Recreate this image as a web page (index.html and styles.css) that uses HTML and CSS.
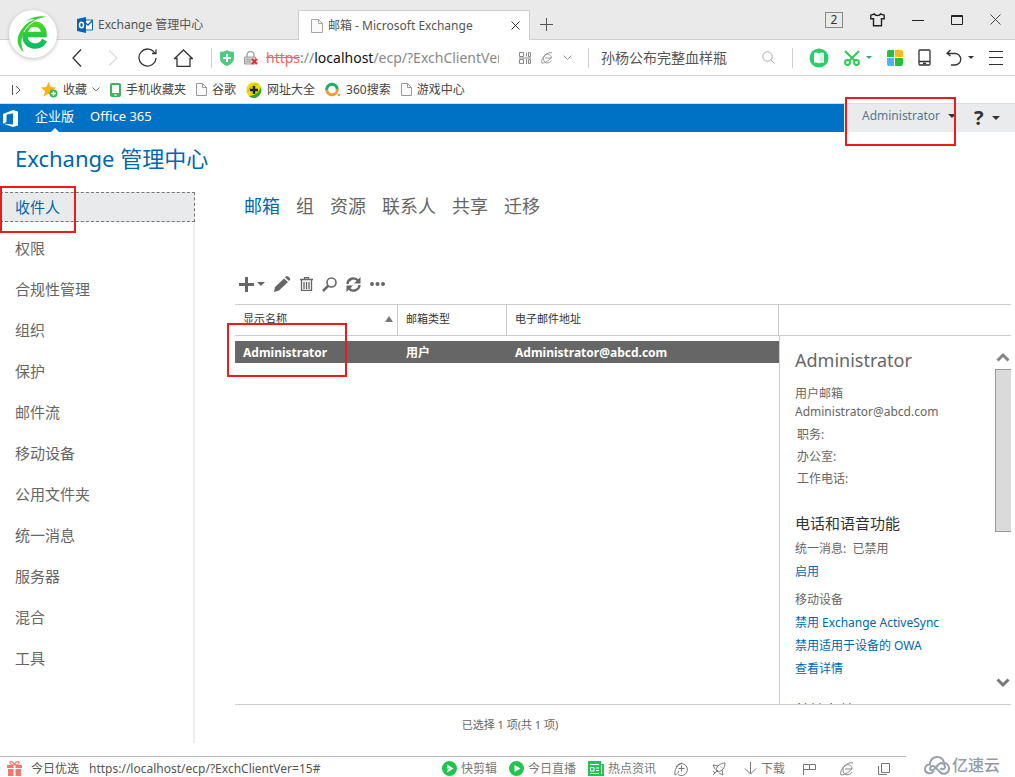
FILE: index.html
```html
<!DOCTYPE html>
<html lang="zh-CN">
<head>
<meta charset="utf-8">
<title>邮箱 - Microsoft Exchange</title>
<link rel="stylesheet" href="styles.css">
</head>
<body>
<header class="browser">
  <div class="tabstrip">
    <div class="browser-logo">
      <svg width="34" height="40" viewBox="0 0 34 40" fill="none">
        <defs><linearGradient id="eg" x1="0" y1="0" x2="0" y2="1"><stop offset="0" stop-color="#49d81f"/><stop offset="1" stop-color="#08bd64"/></linearGradient></defs>
        <path d="M28.500 26c-2 4-5.500 6.500-10.500 6-5.500-.5-9-4.500-9-10.500C9 14 13 10 18 10c6 0 10 4 10 10.500H10" stroke="url(#eg)" stroke-width="5.500"/>
        <path d="M2 14C9 5 22 0 31 3c-9 0-17 5-22 13C5 23 4 31 8 38 1 33 0 25 4 18c4-7 9-10 15-13C13 5 7 8 2 14z" fill="#35cf3c"/>
        <path d="M8 18c3-6 8-10 13-12" stroke="#fff" stroke-width="1"/>
      </svg>
    </div>
    <button class="tab">
      <svg width="16" height="16" viewBox="0 0 16 16"><path d="M6 3h9.500v10H6z" fill="#fff" stroke="#0b68b8"/><path d="M6 4l5 4 5-5" fill="none" stroke="#0b68b8" stroke-width="1.500"/><path d="M0 2l9-2v16l-9-2z" fill="#0764b5"/><ellipse cx="4.500" cy="8" rx="2" ry="2.800" fill="none" stroke="#fff" stroke-width="1.500"/></svg>
      <span>Exchange 管理中心</span>
    </button>
    <div class="tab tab-active">
      <svg width="12" height="14" viewBox="0 0 12 14" fill="#fafafa" stroke="#a5a5a5"><path d="M.5.5h7l4 4v9H.5zM7.500.5v4h4"/></svg>
      <span class="tab-title">邮箱 - Microsoft Exchange</span>
      <button aria-label="关闭标签"><svg width="9" height="9" viewBox="0 0 9 9" stroke="#333"><path d="M.5.5l8 8M8.500.5l-8 8"/></svg></button>
    </div>
    <button class="new-tab" aria-label="新标签"><svg width="13" height="13" viewBox="0 0 13 13" stroke="#555"><path d="M6.500 0v13M0 6.500h13"/></svg></button>
    <div class="window-controls">
      <button class="count">2</button>
      <button aria-label="皮肤"><svg width="15" height="14" viewBox="0 0 15 14" fill="none" stroke="#222" stroke-width="1.400"><path d="M4.500 1L.8 2.200v3.500h2.700V12.800h8V5.700h2.700V2.200L10.500 1c-.5 2-5.500 2-6 0z"/></svg></button>
      <button aria-label="最小化"><svg width="12" height="12" viewBox="0 0 12 12" stroke="#222"><path d="M0 6.500h12"/></svg></button>
      <button aria-label="最大化"><svg width="12" height="12" viewBox="0 0 12 12" fill="none" stroke="#222"><path d="M.5 1.500h11v9H.5zM0 2.500h12"/></svg></button>
      <button aria-label="关闭"><svg width="11" height="11" viewBox="0 0 11 11" stroke="#444"><path d="M.5.5l10 10M10.500.5l-10 10"/></svg></button>
    </div>
  </div>

  <div class="addressbar">
    <div class="nav-buttons">
      <button aria-label="后退"><svg width="10" height="18" viewBox="0 0 10 18" fill="none" stroke="#333" stroke-width="1.300"><path d="M9 .5L1 9l8 8.500"/></svg></button>
      <button aria-label="前进"><svg width="10" height="18" viewBox="0 0 10 18" fill="none" stroke="#ddd" stroke-width="1.300"><path d="M1 1.500L9 9l-8 7.500"/></svg></button>
      <button aria-label="刷新"><svg width="19" height="19" viewBox="0 0 19 19" fill="none" stroke="#333" stroke-width="1.300"><path d="M17 5.500A8.500 8.500 0 1 0 18 10M18 1.500V5.500h-4"/></svg></button>
      <button aria-label="主页"><svg width="19" height="18" viewBox="0 0 19 18" fill="none" stroke="#333" stroke-width="1.300"><path d="M.7 9.500L9.500 1l8.800 8.500H16v7.800H3V9.500z"/></svg></button>
    </div>
    <div class="url-box">
      <svg width="14" height="16" viewBox="0 0 14 16"><path d="M7 0c2 1.500 4.500 1.800 7 1.800V8c0 4-3 6.500-7 8-4-1.500-7-4-7-8V1.800C2.500 1.800 5 1.500 7 0z" fill="#4ecb7c"/><path d="M7 4v8M3 8h8" stroke="#fff" stroke-width="2"/></svg>
      <svg width="14" height="14" viewBox="0 0 14 14"><path d="M3 6V4a3.500 3.500 0 0 1 7 0v2" fill="none" stroke="#a5a5a5" stroke-width="1.500"/><path d="M.5 6h11v7H.5z" fill="#ccc" stroke="#a0a0a0"/><path d="M2 8.500h5M2 10.500h5" stroke="#aaa"/><path d="M8 8l5 5M13 8l-5 5" stroke="#e02a2a" stroke-width="1.800"/></svg>
      <div class="url"><s>https</s>://<b>localhost</b>/ecp/?ExchClientVer=15#</div>
      <svg width="12" height="12" viewBox="0 0 12 12" fill="none" stroke="#888"><path d="M.5.5h4v4h-4zM7.500.5v4M9.500.5h2v4h-2zM.5 7.500h4v4h-4zM7.500 7v5M9.500 7.500h2v4h-2zM0 6h12"/></svg>
      <svg width="12" height="12" viewBox="0 0 14 14" fill="none" stroke="#8b8b8b"><path d="M12 10c-2 4-9 4-9-2 0-7 9-7 9-1H5M1 13C-1 8 7-1 13 1M12 6c-1 3-7 7-11 7"/></svg>
      <svg width="9" height="6" viewBox="0 0 9 6" fill="none" stroke="#999"><path d="M.5.5l4 4 4-4"/></svg>
    </div>
    <div class="search-box">
      <input type="text" value="孙杨公布完整血样瓶" aria-label="搜索">
      <svg width="13" height="13" viewBox="0 0 13 13" fill="none" stroke="#aaa"><circle cx="5.500" cy="5.500" r="4.700"/><path d="M9 9l3.500 3.500"/></svg>
    </div>
    <div class="extensions">
      <button aria-label="阅读"><svg width="20" height="20" viewBox="0 0 20 20"><circle cx="10" cy="10" r="9.500" fill="#27cf6c"/><path d="M5 5c2-1 3.500-.5 5 .5 1.500-1 3-1.500 5-.5v10c-2-.7-3.500-.4-5 .5-1.500-.9-3-1.200-5-.5z" fill="#fff"/><path d="M10.500 6v9l4-.5V5.500z" fill="#d5f5e1"/></svg></button>
      <button class="with-caret" aria-label="截图"><svg width="16" height="16" viewBox="0 0 16 16" fill="none" stroke="#2bcb56" stroke-width="2"><path d="M1 1l10 10M15 1L5 11"/><circle cx="3.500" cy="12.500" r="2.400"/><circle cx="12.500" cy="12.500" r="2.400"/></svg><i class="caret caret-green"></i></button>
      <button aria-label="应用"><svg width="16" height="16" viewBox="0 0 16 16"><path d="M0 2q0-2 2-2h5v7H0z" fill="#24bd3c"/><path d="M8 0h6q2 0 2 2v5H8z" fill="#fbba11"/><path d="M0 8h7v8H2q-2 0-2-2z" fill="#4bb4f0"/><path d="M8 8h8v6q0 2-2 2H8z" fill="#24c03c"/></svg></button>
      <button aria-label="手机"><svg width="13" height="17" viewBox="0 0 13 17" fill="none" stroke="#333" stroke-width="1.300"><rect x="1" y="1" width="11" height="15" rx="1"/><path d="M1 12.500h11M5 14.500h3"/></svg></button>
      <button class="with-caret" aria-label="恢复"><svg width="16" height="17" viewBox="0 0 16 17" fill="none" stroke="#333" stroke-width="1.300"><path d="M4.500 1L1 4.500 4.500 7M1 4.500h8a5.500 5.500 0 0 1 0 11.500H5"/></svg><i class="caret"></i></button>
      <button aria-label="菜单"><svg width="14" height="14" viewBox="0 0 14 14" stroke="#333"><path d="M0 .5h14M0 6.500h14M0 13.500h14"/></svg></button>
    </div>
  </div>

  <nav class="bookmarks">
    <button aria-label="展开"><svg width="9" height="10" viewBox="0 0 9 10" fill="none" stroke="#555"><path d="M.5 0v10M4 1l4 4-4 4"/></svg></button>
    <a class="favorites" href="#"><svg width="17" height="16" viewBox="0 0 17 16"><path d="M7.500 0l2.300 5 5.200.6-4 3.600 1.200 5.300-4.700-2.700-4.800 2.700L4 9.200 0 5.600 5.300 5z" fill="#fbb316"/><circle cx="12.500" cy="11.500" r="4" fill="#35b957"/><path d="M12.500 9v5M10 11.500h5" stroke="#fff" stroke-width="1.300"/></svg>收藏<svg width="8" height="5" viewBox="0 0 8 5" fill="none" stroke="#777"><path d="M.5.500L4 4 7.500.5"/></svg></a>
    <a href="#"><svg width="11" height="14" viewBox="0 0 11 14"><rect width="11" height="14" rx="2" fill="#3bb55c"/><path d="M2 2h7v8H2zM4 11.500h3v1H4z" fill="#fff"/></svg>手机收藏夹</a>
    <a href="#"><svg width="11" height="13" viewBox="0 0 11 13" fill="#fafafa" stroke="#999"><path d="M.5.5h6l4 4v8H.5zM6.500.5v4h4"/></svg>谷歌</a>
    <a href="#"><svg width="16" height="16" viewBox="0 0 16 16"><circle cx="8" cy="8" r="7.700" fill="#f5d60d"/><path d="M1 11C3 6 8 1 13 2c-5 0-9 3-12 9z" fill="#2aa23e"/><path d="M3 14c5 0 10-3 12-9 1 5-1 10-7 11-2 0-4-1-5-2z" fill="#2aa23e"/><path d="M8 4v8M4 8h8" stroke="#142c19" stroke-width="2.500"/></svg>网址大全</a>
    <a href="#"><svg width="16" height="15" viewBox="0 0 16 15" fill="none" stroke-width="3"><path d="M1.700 8a5.300 5.300 0 0 1 10.600-1" stroke="#1fac67"/><path d="M1.700 8a5.300 5.300 0 0 0 10.600-1" stroke="#f39b36"/><circle cx="14" cy="12.800" r="1.300" fill="#f39b36" stroke="none"/></svg>360搜索</a>
    <a href="#"><svg width="11" height="13" viewBox="0 0 11 13" fill="#fafafa" stroke="#999"><path d="M.5.5h6l4 4v8H.5zM6.500.5v4h4"/></svg>游戏中心</a>
  </nav>
</header>

<div class="suitebar">
  <div class="suite-main">
    <svg width="16" height="17" viewBox="0 0 16 17"><path d="M0 4l10-4 5 1.500v14L10 17 0 13.500l10 1V3.200L3.500 4.800v7.200L0 13.500z" fill="#fff"/></svg>
    <a class="suite-current" href="#">企业版</a>
    <a href="#">Office 365</a>
  </div>
  <div class="suite-user">
    <button class="user-menu">Administrator<i class="caret"></i></button>
    <button class="help-menu"><b>?</b><i class="caret"></i></button>
    <span class="callout callout-user"></span>
  </div>
</div>

<main class="page">
  <h1>Exchange 管理中心</h1>
  <div class="columns">
    <nav class="sidebar">
      <a class="selected" href="#">收件人</a>
      <a href="#">权限</a>
      <a href="#">合规性管理</a>
      <a href="#">组织</a>
      <a href="#">保护</a>
      <a href="#">邮件流</a>
      <a href="#">移动设备</a>
      <a href="#">公用文件夹</a>
      <a href="#">统一消息</a>
      <a href="#">服务器</a>
      <a href="#">混合</a>
      <a href="#">工具</a>
      <span class="callout callout-nav"></span>
    </nav>
    <section class="workspace">
      <nav class="subtabs">
        <a class="current" href="#">邮箱</a><a href="#">组</a><a href="#">资源</a><a href="#">联系人</a><a href="#">共享</a><a href="#">迁移</a>
      </nav>
      <div class="commands">
        <button class="with-caret" aria-label="新建"><svg width="15" height="15" viewBox="0 0 15 15" stroke="#666" stroke-width="3"><path d="M7.500 0v15M0 7.500h15"/></svg><i class="caret"></i></button>
        <button aria-label="编辑"><svg width="17" height="16" viewBox="0 0 17 16" fill="#666"><path d="M1 11L10 2.500l4 3.500-9 8.500-5 1.500zM11 1.500l1.500-1.500q1 0 2 .8l1.500 1.500q.5 1 0 1.500L15 5z"/></svg></button>
        <button aria-label="删除"><svg width="13" height="14" viewBox="0 0 13 14" fill="none" stroke="#666"><path d="M0 2.500h13M4.500 2V.5h4V2M1.500 3v10.500h10V3M4 5v7M6.500 5v7M9 5v7" stroke-width="1.300"/></svg></button>
        <button aria-label="搜索"><svg width="15" height="15" viewBox="0 0 15 15" fill="none" stroke="#666"><circle cx="9.500" cy="5.500" r="4.500" stroke-width="1.600"/><path d="M6 9l-5 5" stroke-width="2.500"/></svg></button>
        <button aria-label="刷新"><svg width="15" height="15" viewBox="0 0 15 15" fill="none" stroke="#666" stroke-width="2.400"><path d="M1.500 7A6 6 0 0 1 12 3.500M13.500 8A6 6 0 0 1 3 11.500"/><path d="M14.500 0v6.500H8zM.5 15V8.500H7z" fill="#666" stroke="none"/></svg></button>
        <button aria-label="更多"><svg width="15" height="4" viewBox="0 0 15 4" fill="#666"><circle cx="2" cy="2" r="2"/><circle cx="7.500" cy="2" r="2"/><circle cx="13" cy="2" r="2"/></svg></button>
      </div>
      <div class="split">
        <div class="list">
          <table>
            <thead><tr><th class="col-name"><span>显示名称<i class="sort"></i></span></th><th class="col-type">邮箱类型</th><th>电子邮件地址</th></tr></thead>
            <tbody><tr><td>Administrator</td><td>用户</td><td>Administrator@abcd.com</td></tr></tbody>
          </table>
          <span class="callout callout-row"></span>
        </div>
        <div class="side">
          <div class="side-head"></div>
          <aside class="details">
            <div class="details-body">
              <h2>Administrator</h2>
              <p class="ident">用户邮箱<br>Administrator@abcd.com</p>
              <ul><li>职务:</li><li>办公室:</li><li>工作电话:</li></ul>
              <h3>电话和语音功能</h3>
              <p>统一消息:&nbsp; 已禁用</p>
              <a href="#">启用</a>
              <p class="group">移动设备</p>
              <a href="#">禁用 Exchange ActiveSync</a>
              <a href="#">禁用适用于设备的 OWA</a>
              <a href="#">查看详情</a>
              <h3 class="next">就地存档</h3>
            </div>
            <div class="scroller">
              <button aria-label="向上"><svg width="14" height="10" viewBox="0 0 14 10" fill="none" stroke="#858585" stroke-width="3"><path d="M1.500 8.500L7 3l5.500 5.500"/></svg></button>
              <div class="track"><div class="thumb"></div></div>
              <button aria-label="向下"><svg width="14" height="10" viewBox="0 0 14 10" fill="none" stroke="#777" stroke-width="3"><path d="M1.500 1.500L7 7l5.500-5.500"/></svg></button>
            </div>
          </aside>
        </div>
      </div>
      <p class="summary">已选择 1 项(共 1 项)</p>
    </section>
  </div>
</main>

<footer class="statusbar">
  <div class="status-items">
    <svg width="15" height="15" viewBox="0 0 15 15"><path d="M0 4h6.500v3H0zM8.500 4H15v3H8.500zM1 8h5.500v7H1zM8.500 8H14v7H8.500z" fill="#f2786f"/><path d="M7 4C3 4 2 1 4 .7 6 .5 7 2 7.500 4 8 2 9 .5 11 .7c2 .3 1 3.300-3 3.300" fill="none" stroke="#f2786f" stroke-width="1.200"/></svg>
    <span class="pick">今日优选</span>
    <span>https://localhost/ecp/?ExchClientVer=15#</span>
    <div class="status-tools">
      <a href="#"><svg width="15" height="15" viewBox="0 0 15 15"><circle cx="7.500" cy="7.500" r="7.500" fill="#1fc64c"/><path d="M5 3.500l6.500 4-6.500 4 1-3.500 3-1-4 .5z" fill="#fff"/></svg>快剪辑</a>
      <a href="#"><svg width="15" height="15" viewBox="0 0 15 15"><circle cx="7.500" cy="7.500" r="7.500" fill="#1fc64c"/><path d="M5.500 4l6 3.500-6 3.500z" fill="#fff"/></svg>今日直播</a>
      <a href="#"><svg width="16" height="15" viewBox="0 0 16 15"><path d="M0 0h13v3h3v12H0z" fill="#1fc64c"/><path d="M2 3.500h9M8 7h3M8 9.500h3M2 12.500h9M13.500 4v9" stroke="#fff"/><path d="M2.500 6.500h3.500v3.500H2.500z" fill="none" stroke="#fff"/></svg>热点资讯</a>
      <button aria-label="加速"><svg width="14" height="14" viewBox="0 0 14 14" fill="none" stroke="#777"><path d="M4 12.500A6 6 0 1 0 2 5M7.500 3.500v6M4.500 6.500h6M1 13C0 8 3 3 8 1M1 13c2-1 3-2 4-4"/></svg></button>
      <button aria-label="火箭"><svg width="14" height="14" viewBox="0 0 14 14" fill="none" stroke="#777"><path d="M4 8C5 4 8 1 13 1c0 5-3 8-7 9zM6 4L1 3l2 4M10 8l1 5-4-2M1 13l5-5M1 9l2 2M9 4.500l1 1"/></svg></button>
      <a href="#"><svg width="13" height="13" viewBox="0 0 13 13" fill="none" stroke="#777"><path d="M6.500 0v12M1 6.500L6.500 12 12 6.500"/></svg>下载</a>
      <button aria-label="标记"><svg width="13" height="12" viewBox="0 0 13 12" fill="none" stroke="#777"><path d="M.5 12V1.500h12v5H.5M6.500 1.500v5"/></svg></button>
      <button aria-label="内核"><svg width="14" height="14" viewBox="0 0 14 14" fill="none" stroke="#888"><path d="M12 10c-2 4-9 4-9-2 0-7 9-7 9-1H5M1 13C-1 8 7-1 13 1M12 6c-1 3-7 7-11 7"/></svg></button>
      <button aria-label="窗口"><svg width="12" height="12" viewBox="0 0 12 12" fill="none" stroke="#777"><path d="M3.500.5h8v9h-8zM.5 3v8.500H9"/></svg></button>
    </div>
  </div>
  <div class="watermark">
    <svg width="26" height="19" viewBox="0 0 26 19" fill="none" stroke="#9aa1ad" stroke-width="2"><path d="M10 15c-3 4-9 2.500-9-2 0-3.500 3-5 5-4.500C6 4 9 1 13 1s6.500 2.500 7 6c3 0 5 2.500 5 5.500 0 5-6 7-9 3.500l-5-5c-2-2-5-.5-5 1.500s3 2.500 4.500.5l4-4.500c3-3 7-.5 6.500 3-.5 2-3.500 2.500-4.500.5"/></svg>
    <span>亿速云</span>
  </div>
</footer>
</body>
</html>
```
FILE: styles.css
```css
* { box-sizing: border-box; }
body {
  margin: 0;
  height: 100vh;
  display: flex;
  flex-direction: column;
  overflow: hidden;
  background: #fff;
  color: #666;
  font: 12px/18px "Noto Sans", "Noto Sans CJK SC", sans-serif;
}
h1, h2, h3, p, ul { margin: 0; padding: 0; font-weight: 400; list-style: none; }
a { color: inherit; text-decoration: none; }
button {
  display: flex;
  align-items: center;
  padding: 0;
  border: 0;
  background: none;
  color: inherit;
  font: inherit;
}
svg { display: block; flex: none; }
.caret {
  border: 4px solid transparent;
  border-top-color: #333;
  border-bottom: 0;
}
.extensions .caret { border-width: 3px; border-bottom: 0; }
.extensions .caret-green { border-top-color: #35a870; }
.callout { position: absolute; border: 2px solid #ec1c1c; pointer-events: none; }

/* Browser chrome */
.tabstrip {
  position: relative;
  display: flex;
  align-items: flex-end;
  height: 40px;
  padding-left: 66px;
  background: #eaeaea;
  border-bottom: 1px solid #d0d0d0;
}
.browser-logo {
  position: absolute;
  left: 9px;
  top: 10px;
  display: grid;
  place-items: center;
  width: 48px;
  height: 48px;
  border-radius: 50%;
  background: #fff;
  box-shadow: 0 1px 4px #bbb;
}
.tab {
  display: flex;
  align-items: center;
  gap: 5px;
  width: 232px;
  height: 29px;
  padding: 0 9px 0 11px;
  color: #555;
}
.tab-active {
  height: 30px;
  margin-bottom: -1px;
  padding-left: 12px;
  background: #fff;
  border: 1px solid #d0d0d0;
  border-bottom: 0;
}
.tab-title { flex: 1; }
.new-tab { height: 30px; margin-left: 10px; }
.window-controls {
  display: flex;
  align-items: center;
  gap: 27px;
  height: 39px;
  margin-left: auto;
  padding-right: 14px;
}
.count { width: 18px; height: 16px; justify-content: center; border: 1px solid #888; color: #333; }
.addressbar {
  display: flex;
  align-items: center;
  height: 36px;
  padding: 0 12px 0 72px;
  border-bottom: 1px solid #d4d4d4;
}
.nav-buttons { display: flex; align-items: center; gap: 17px; padding-right: 18px; }
.nav-buttons button:nth-child(2) { margin: 0 3px 0 9px; }
.url-box {
  flex: 1;
  min-width: 0;
  display: flex;
  align-items: center;
  gap: 10px;
  height: 20px;
  padding: 0 16px 0 8px;
  border-left: 1px solid #d0d0d0;
}
.url { flex: 1 1 0; min-width: 0; margin: 0 10px 0 -2px; overflow: hidden; white-space: nowrap; font-size: 14px; color: #888; }
.url s { color: #ef6464; }
.url b { font-weight: 400; color: #111; }
.search-box {
  flex: none;
  display: flex;
  align-items: center;
  width: 205px;
  height: 20px;
  padding: 0 17px 0 12px;
  border: solid #d0d0d0;
  border-width: 0 1px;
}
.search-box input { flex: 1; min-width: 0; padding: 0; border: 0; outline: 0; font: inherit; font-size: 14px; color: #555; }
.extensions { flex: none; display: flex; align-items: center; gap: 15px; padding-left: 16px; }
.with-caret { gap: 6px; }
.bookmarks { display: flex; align-items: center; gap: 10px; height: 28px; padding-left: 12px; border-bottom: 1px solid #ddd; color: #444; }
.bookmarks a { display: flex; align-items: center; gap: 5px; }
.bookmarks .favorites { margin-left: 10px; }

/* Office suite bar */
.suitebar { display: flex; height: 28px; font-size: 13px; }
.suite-main { flex: 1; display: flex; align-items: center; gap: 16px; padding-left: 3px; background: #0072c6; color: #fff; }
.suite-main a { line-height: 24px; padding-bottom: 4px; }
.suite-current { position: relative; }
.suite-current::after {
  content: "";
  position: absolute;
  left: 50%;
  bottom: 0;
  margin-left: -4px;
  border: 4px solid transparent;
  border-top: 0;
  border-bottom-color: #fff;
}
.suite-user { position: relative; display: flex; align-items: center; gap: 18px; width: 171px; padding-left: 18px; background: #eaebec; font-size: 12px; }
.suite-user button { gap: 8px; padding-bottom: 4px; color: #55788f; }
.suite-user .help-menu { padding: 0; color: #333; font-size: 20px; }
.callout-user { left: 1px; top: -7px; width: 111px; height: 49px; }

/* Admin center */
.page { flex: 1; min-height: 0; display: flex; flex-direction: column; padding: 10px 4px 13px 0; }
h1 { padding-left: 15px; font-size: 22px; line-height: 32px; color: #0067b0; }
.columns { flex: 1; min-height: 0; display: flex; gap: 40px; margin-top: 18px; }
.sidebar {
  position: relative;
  display: flex;
  flex-direction: column;
  gap: 11px;
  width: 195px;
  border-right: 2px solid #eee;
  font-size: 15px;
}
.sidebar a { height: 30px; padding-left: 15px; line-height: 30px; }
.sidebar .selected { margin-right: -2px; background: #e9eaec; border: 1px dashed #777; border-left: 0; line-height: 28px; color: #0067b0; }
.callout-nav { left: 0; top: -6px; width: 76px; height: 47px; }
.workspace { flex: 1; min-width: 0; display: flex; flex-direction: column; }
.subtabs { display: flex; gap: 16px; padding-left: 9px; font-size: 18px; line-height: 28px; }
.subtabs .current { color: #0067b0; }
.commands { display: flex; align-items: center; gap: 9px; height: 20px; margin: 54px 0 10px 4px; }
.commands .with-caret { gap: 3px; }
.commands .caret { border-top-color: #666; }
.split { flex: 1; min-height: 0; display: flex; border: solid #ccc; border-width: 1px 0; }
.list { position: relative; flex: 1; }
table { width: 100%; border-spacing: 0; table-layout: fixed; text-align: left; }
th { height: 31px; padding: 0 8px 2px; border: solid #ccc; border-width: 0 1px 1px 0; font-size: 11px; font-weight: 400; color: #333; }
th span { display: flex; align-items: center; justify-content: space-between; }
.col-name { width: 163px; padding-right: 4px; }
.col-type { width: 109px; }
.sort { border: 4px solid transparent; border-top: 0; border-bottom: 6px solid #777; }
tbody::before { content: ""; display: block; height: 5px; }
td { height: 22px; padding: 2px 8px 0; background: #666; color: #fff; font-weight: 700; }
.callout-row { left: -8px; top: 18px; width: 120px; height: 54px; }
.side { display: flex; flex-direction: column; width: 232px; min-height: 0; }
.side-head { flex: none; height: 31px; border-bottom: 1px solid #ccc; }
.details { flex: 1; min-height: 0; display: flex; overflow: hidden; border-left: 1px solid #ccc; }
.details-body { flex: 1; padding: 10px 0 0 15px; line-height: 23px; white-space: nowrap; }
.details h2 { margin-bottom: 11px; font-size: 18px; line-height: 28px; }
.ident { line-height: 18px; }
.details ul { margin: 3px 0 21px 2px; line-height: 22px; }
.details h3 { margin-bottom: 2px; font-size: 15px; line-height: 24px; color: #333; }
.details .next { margin-top: 18px; }
.details-body a { display: block; color: #0067b0; }
.group { margin-top: 5px; }
.scroller { display: flex; flex-direction: column; align-items: center; width: 16px; padding: 16px 0; }
.track { flex: 1; align-self: stretch; padding: 7px 0; }
.thumb { height: 54%; border: 1px solid #999; border-right: 0; background: #dadada; }
.summary { padding: 11px 0 9px; text-align: center; margin-right: 226px; font-size: 11px; }

/* Status bar */
.statusbar { display: flex; align-items: flex-end; height: 21px; color: #555; }
.status-items { flex: 1; display: flex; align-items: center; height: 21px; padding: 3px 10px 0 7px; border-top: 1px solid #bbb; white-space: nowrap; }
.pick { margin: 0 10px 0 9px; }
.status-tools { display: flex; align-items: center; gap: 12px; margin-left: auto; color: #777; }
.status-tools a { display: flex; align-items: center; gap: 4px; }
.status-tools button { margin: 0 6px; }
.watermark { display: flex; align-items: center; gap: 2px; width: 109px; padding-left: 18px; font-size: 16px; line-height: 24px; color: #939ba9; font-weight: 500; }
```
